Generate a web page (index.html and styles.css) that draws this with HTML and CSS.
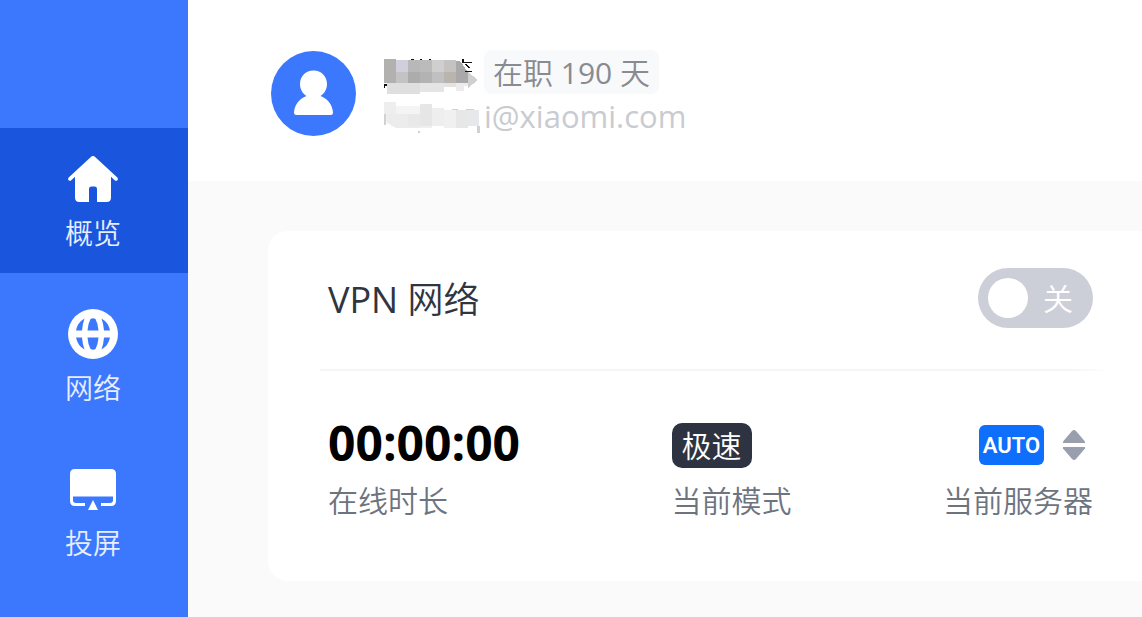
FILE: index.html
```html
<!DOCTYPE html>
<html lang="zh-CN">
    <head>
        <meta charset="utf-8">
        <title>概览</title>
        <meta name="viewport" content="width=device-width, initial-scale=1.0">
        <link rel="stylesheet" href="styles.css">
    </head>
    <body>
        <nav class="sidebar">
            <a class="nav-item active" href="#overview">
                <svg class="nav-icon" viewBox="0 0 50 50" fill="#fff">
                    <path d="M22.6 3.2Q25 1 27.4 3.2L49.3 23.6Q50.4 25 49.4 26.3Q48.2 27.4 46.7 26.2L43 22.8V43.5Q43 48 38.5 48H29V35Q29 32.5 26.5 32.5H23.5Q21 32.5 21 35V48H11.5Q7 48 7 43.5V22.8L3.3 26.2Q1.8 27.4 .6 26.3Q-.4 25 .7 23.6Z"/>
                </svg>
                <span>概览</span>
            </a>
            <a class="nav-item" href="#network">
                <svg class="nav-icon" viewBox="0 0 50 50">
                    <circle cx="25" cy="25" r="25" fill="#fff"/>
                    <g fill="#3b78fe">
                        <path d="M8 21.500Q9.500 13.500 16.500 9.500Q14.500 15 14 21.500Z"/>
                        <path d="M8 28.500Q9.500 36.500 16.500 40.500Q14.500 35 14 28.500Z"/>
                        <path d="M42 21.500Q40.500 13.500 33.500 9.500Q35.500 15 36 21.500Z"/>
                        <path d="M42 28.500Q40.500 36.500 33.500 40.500Q35.500 35 36 28.500Z"/>
                        <path d="M19.500 21.500Q20 14.500 22.500 10Q25 8.500 27.500 10Q30 14.500 30.500 21.500Z"/>
                        <path d="M19.500 28.500Q20 35.500 22.500 40Q25 41.500 27.500 40Q30 35.500 30.500 28.500Z"/>
                    </g>
                </svg>
                <span>网络</span>
            </a>
            <a class="nav-item" href="#cast">
                <svg class="nav-icon" viewBox="0 0 50 50">
                    <path d="M7 5H43Q48 5 48 10V37Q48 42 43 42H33V39H42Q45 39 45 36V32.500H5V36Q5 39 8 39H17V42H7Q2 42 2 37V10Q2 5 7 5Z" fill="#fff"/>
                    <path d="M25 36L30 46H20Z" fill="#fff"/>
                </svg>
                <span>投屏</span>
            </a>
        </nav>

        <main class="main">
            <header class="profile">
                <svg class="avatar" viewBox="0 0 85 85">
                    <circle cx="42.500" cy="42.500" r="42.500" fill="#3b78fe"/>
                    <path d="M42.500 19.500C50.500 19.500 56 25.500 56 33C56 38 53.500 42.500 49.500 45C57 48 61.500 54 62 61.500Q62 64 59.500 64H25.500Q23 64 23 61.500C23.500 54 28 48 35.500 45C31.500 42.500 29 38 29 33C29 25.500 34.500 19.500 42.500 19.500Z" fill="#fff"/>
                </svg>
                <div>
                    <div class="profile-row">
                        <!-- masked name -->
                        <svg class="mask" viewBox="0 0 100 44" shape-rendering="crispEdges">
                            <path d="M0 9h12v24H0z" fill="#b2b1af"/>
                            <path d="M12 10h12v12H12z" fill="#d0cfdb"/>
                            <path d="M12 22h12v11H12z" fill="#c3c3c5"/>
                            <path d="M24 10h12v12H24z" fill="#b8b8b8"/>
                            <path d="M24 22h12v11H24z" fill="#acacac"/>
                            <path d="M36 10h12v12H36z" fill="#bbb"/>
                            <path d="M36 22h12v11H36z" fill="#b3b3b3"/>
                            <path d="M48 10h12v12H48z" fill="#cfcfcf"/>
                            <path d="M48 22h12v11H48z" fill="#c0c0c0"/>
                            <path d="M60 10h12v12H60z" fill="#c4c3c2"/>
                            <path d="M60 22h12v11H60z" fill="#b9b5ae"/>
                            <path d="M72 11h4l8 11v11H72z" fill="#a9a9a9"/>
                            <path d="M3 33h57v9H36v2H3z" fill="#dfdfdf"/>
                            <path d="M36 33h24v9H36z" fill="#e5e5e5"/>
                            <path d="M60 33h16v4H60z" fill="#e3e3e3"/>
                            <path d="M72 33h12v3h-4v5h-8z" fill="#ececec"/>
                            <path d="M84 22l10 8-10 8z" fill="#d0d0d0"/>
                            <path d="M27 9h3v1h-3zM36 9h2v1h-2zM45 9h2v1h-2zM0 34h3v2H1v2H0zM78 9h2v3h8v1H78zM80 14h2l4 4h-2zM81 21h7v1h-7z" fill="#111"/>
                        </svg>
                        <span class="tenure">在职 <span class="latin">190</span> 天</span>
                    </div>
                    <div class="profile-row">
                        <!-- masked mail account -->
                        <svg class="mask" viewBox="0 0 100 44" shape-rendering="crispEdges">
                            <path d="M0 8h12v12H0z" fill="#eee"/>
                            <path d="M0 20h12v10H6v-2H0z" fill="#f0f0f0"/>
                            <path d="M12 12h24v8H12z" fill="#f4f4f4"/>
                            <path d="M3 20h33v14H12l-9-5z" fill="#ececec"/>
                            <path d="M24 20h12v12H24z" fill="#e9e9e9"/>
                            <path d="M36 10h12v22H36z" fill="#e6e6e6"/>
                            <path d="M36 32h12v2H36z" fill="#f0f0f0"/>
                            <path d="M48 14h12v18H48z" fill="#eee"/>
                            <path d="M60 16h12v18H60z" fill="#f0f0f0"/>
                            <path d="M72 16h12v18H72z" fill="#e7e7e7"/>
                            <path d="M84 16h11v16H84z" fill="#e6e8ec"/>
                            <path d="M0 20h2v11H0zM68 15h6v1h-6zM82 15h8v1h-8zM93 32h3v7h-3zM34 37h2v2h-2z" fill="#cfd1d5"/>
                        </svg>
                        <span class="email latin">i@xiaomi.com</span>
                    </div>
                </div>
            </header>

            <section class="card">
                <div class="card-head">
                    <h2><span class="latin">VPN</span> 网络</h2>
                    <label class="switch">
                        <input type="checkbox" aria-label="VPN 网络">
                        <span>关</span>
                    </label>
                </div>
                <div class="stats">
                    <div class="stat">
                        <div class="stat-value time">00:00:00</div>
                        <div class="stat-label">在线时长</div>
                    </div>
                    <div class="stat">
                        <div class="stat-value"><span class="mode">极速</span></div>
                        <div class="stat-label">当前模式</div>
                    </div>
                    <div class="stat">
                        <div class="stat-value server">
                            <select id="server" class="server-select">
                                <option>AUTO</option>
                            </select>
                            <svg class="sort" viewBox="0 0 22 30" fill="#9a9fae">
                                <path d="M11 0Q12 0 13 1L22 11.500V13H0V11.500L9 1Q10 0 11 0Z"/>
                                <path d="M11 30Q12 30 13 29L22 18.500V17H0V18.500L9 29Q10 30 11 30Z"/>
                            </svg>
                        </div>
                        <label class="stat-label" for="server">当前服务器</label>
                    </div>
                </div>
            </section>
        </main>
    </body>
</html>
```
FILE: styles.css
```css
* {
    box-sizing: border-box;
}
body {
    display: flex;
    min-height: 100vh;
    margin: 0;
    background-color: #fafafa;
    font-family: "Open Sans", "Noto Sans CJK SC", sans-serif;
    font-size: 30px;
    font-weight: 350;
    line-height: 40px;
}
.latin {
    font-weight: 400;
}

/* sidebar */
.sidebar {
    display: flex;
    flex-direction: column;
    flex: none;
    gap: 10px;
    width: 188px;
    padding-top: 128px;
    background-color: #3b78fe;
}
.nav-item {
    display: flex;
    flex-direction: column;
    align-items: center;
    gap: 8px;
    padding: 26px 2px 21px 0;
    color: #e6eeff;
    font-family: "Noto Sans CJK SC", sans-serif;
    font-size: 28px;
    text-decoration: none;
}
.nav-item.active {
    background-color: #1a56dd;
}
.nav-icon {
    width: 50px;
    height: 50px;
}

.main {
    flex: 1;
    min-width: 0;
}

/* user info */
.profile {
    display: flex;
    align-items: center;
    gap: 28px;
    padding: 50px 40px 43px 83px;
    background-color: #fff;
}
.avatar {
    width: 85px;
    height: 85px;
    margin-bottom: 2px;
}
.profile-row {
    display: flex;
    align-items: center;
    height: 44px;
}
.mask {
    width: 100px;
    height: 44px;
}
.tenure {
    padding: 3px 9px 1px;
    border-radius: 8px;
    background-color: #f8f9fb;
    color: #888b90;
}
.email {
    color: #c9cbd0;
    font-size: 31px;
}

/* vpn card */
.card {
    margin: 50px 0 36px 80px;
    padding: 0 32px 60px 52px;
    border-radius: 20px 0 0 20px;
    background-color: #fff;
}
.card-head {
    display: flex;
    align-items: center;
    justify-content: space-between;
    height: 140px;
    padding: 0 17px 4px 8px;
    border-bottom: 2px solid;
    border-image: linear-gradient(to right, #f5f5f6 95%, #fff) 1;
}
.card-head h2 {
    margin: 0;
    padding-top: 4px;
    color: #30353f;
    font-size: 36px;
    font-weight: 350;
}
.switch {
    display: flex;
    align-items: center;
    justify-content: space-between;
    width: 115px;
    height: 60px;
    padding: 0 20px 0 10px;
    border-radius: 30px;
    background-color: #cdcfd8;
    color: #fff;
    cursor: pointer;
}
.switch input {
    appearance: none;
    width: 40px;
    height: 40px;
    margin: 0;
    border-radius: 50%;
    background-color: #fff;
    cursor: pointer;
}
.switch span {
    padding-top: 2px;
}
.stats {
    display: flex;
    justify-content: space-between;
    padding: 49px 17px 0 8px;
}
.stat-value {
    display: flex;
    align-items: center;
    height: 50px;
    margin-bottom: 11px;
}
.stat-label {
    display: block;
    color: #6d7480;
}
.time {
    padding-bottom: 4px;
    color: #000;
    font-size: 48px;
    font-weight: 700;
}
.mode {
    padding: 2px 10px;
    border-radius: 10px;
    background-color: #2d3340;
    color: #fff;
    line-height: 41px;
}
.server {
    justify-content: flex-end;
    gap: 19px;
    padding-right: 8px;
}
.server-select {
    appearance: none;
    width: 65px;
    height: 40px;
    padding: 0;
    border: none;
    border-radius: 6px;
    background-color: #0d6ffc;
    color: #fff;
    font-family: "Liberation Sans Narrow", Roboto, sans-serif;
    font-size: 22px;
    font-weight: 600;
    text-align: center;
    cursor: pointer;
}
.sort {
    width: 22px;
    height: 30px;
}
```
